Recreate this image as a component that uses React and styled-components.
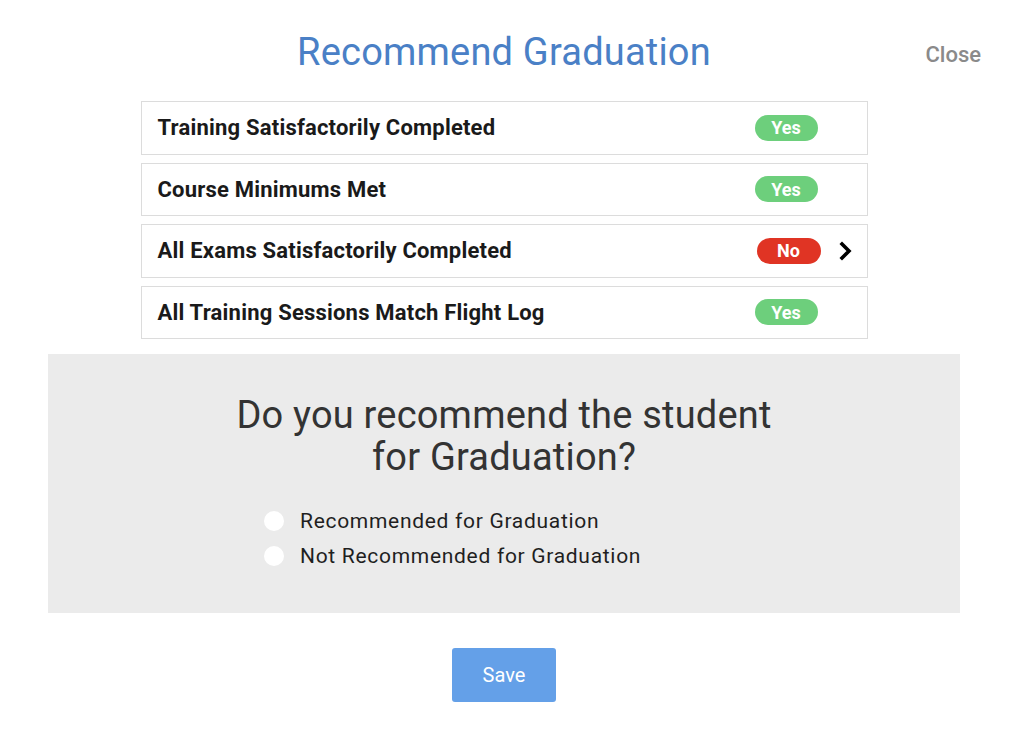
import React, { useState } from "react";
import styled, { createGlobalStyle } from "styled-components";

const GlobalStyle = createGlobalStyle`
  html, body {
    margin: 0;
    padding: 0;
    background: #ffffff;
    font-family: Roboto, "Liberation Sans", sans-serif;
  }
`;

const Page = styled.div`
  width: 1008px;
  padding-right: 4px;
  display: flex;
  flex-direction: column;
  align-items: center;
`;

const Header = styled.div`
  width: 100%;
  display: grid;
  grid-template-columns: 1fr auto 1fr;
  align-items: center;
  padding-top: 28px;
  margin-bottom: 25px;
`;

const Title = styled.h1`
  grid-column: 2;
  margin: 0;
  font-size: 38px;
  line-height: 48px;
  font-weight: 400;
  letter-spacing: 0.2px;
  color: #4a80c6;
`;

const Close = styled.button`
  justify-self: end;
  margin-right: 27px;
  margin-top: 4px;
  border: none;
  background: none;
  padding: 0;
  font-family: inherit;
  font-size: 22px;
  font-weight: 500;
  color: #8a8a8a;
  cursor: pointer;
`;

const List = styled.div`
  width: 727px;
  display: flex;
  flex-direction: column;
  gap: 8px;
`;

const Row = styled.div`
  height: 53.5px;
  box-sizing: border-box;
  border: 1px solid #dcdcdc;
  display: flex;
  align-items: center;
  padding: 0 15px 0 16px;
  cursor: ${(p) => (p.$link ? "pointer" : "default")};
`;

const Label = styled.div`
  flex: 1;
  font-size: 22px;
  font-weight: 700;
  letter-spacing: 0.2px;
  color: #1a1a1a;
`;

const Pill = styled.span`
  width: ${(p) => (p.$ok ? "63px" : "64px")};
  height: 26px;
  border-radius: 13px;
  background: ${(p) => (p.$ok ? "#6dcf7c" : "#e03424")};
  color: #ffffff;
  font-size: 18px;
  font-weight: 700;
  display: flex;
  align-items: center;
  justify-content: center;
  margin-right: ${(p) => (p.$ok ? "3px" : "0")};
`;

const Chevron = styled.span`
  width: 14px;
  margin-left: 17px;
  display: flex;
  align-items: center;
  justify-content: center;
`;

const Panel = styled.section`
  width: 912px;
  box-sizing: border-box;
  margin-top: 15px;
  background: #ebebeb;
  padding: 40px 0 40px;
  display: flex;
  flex-direction: column;
`;

const Question = styled.h2`
  margin: 0 0 25px;
  text-align: center;
  font-size: 38px;
  line-height: 42px;
  font-weight: 400;
  letter-spacing: 0.2px;
  color: #333333;
`;

const Options = styled.div`
  padding-left: 216px;
  display: flex;
  flex-direction: column;
`;

const Option = styled.label`
  display: flex;
  align-items: center;
  gap: 16px;
  height: 35px;
  font-size: 21px;
  letter-spacing: 0.7px;
  color: #1f1f1f;
  cursor: pointer;
`;

const Dot = styled.span`
  width: 20px;
  height: 20px;
  border-radius: 50%;
  background: #ffffff;
  display: flex;
  align-items: center;
  justify-content: center;
  &::after {
    content: "";
    width: 10px;
    height: 10px;
    border-radius: 50%;
    background: ${(p) => (p.$on ? "#4a80c6" : "transparent")};
  }
`;

const SaveButton = styled.button`
  margin-top: 35px;
  width: 104px;
  height: 54px;
  border: none;
  border-radius: 3px;
  background: #64a0e8;
  color: #ffffff;
  font-family: inherit;
  font-size: 20px;
  cursor: pointer;
`;

const checks = [
  { label: "Training Satisfactorily Completed", ok: true },
  { label: "Course Minimums Met", ok: true },
  { label: "All Exams Satisfactorily Completed", ok: false },
  { label: "All Training Sessions Match Flight Log", ok: true },
];

const options = ["Recommended for Graduation", "Not Recommended for Graduation"];

const App = () => {
  const [choice, setChoice] = useState(null);

  return (
    <Page>
      <GlobalStyle />
      <Header>
        <Title>Recommend Graduation</Title>
        <Close>Close</Close>
      </Header>
      <List>
        {checks.map((item) => (
          <Row key={item.label} $link={!item.ok}>
            <Label>{item.label}</Label>
            <Pill $ok={item.ok}>{item.ok ? "Yes" : "No"}</Pill>
            <Chevron>
              {!item.ok && (
                <svg width="14" height="20" viewBox="0 0 14 20">
                  <polyline
                    points="4,3 11,10 4,17"
                    fill="none"
                    stroke="#000"
                    strokeWidth="3.6"
                    strokeLinecap="square"
                  />
                </svg>
              )}
            </Chevron>
          </Row>
        ))}
      </List>
      <Panel>
        <Question>
          Do you recommend the student
          <br />
          for Graduation?
        </Question>
        <Options>
          {options.map((opt, idx) => (
            <Option key={opt} onClick={() => setChoice(idx)}>
              <Dot $on={choice === idx} />
              {opt}
            </Option>
          ))}
        </Options>
      </Panel>
      <SaveButton>Save</SaveButton>
    </Page>
  );
};

export default App;
